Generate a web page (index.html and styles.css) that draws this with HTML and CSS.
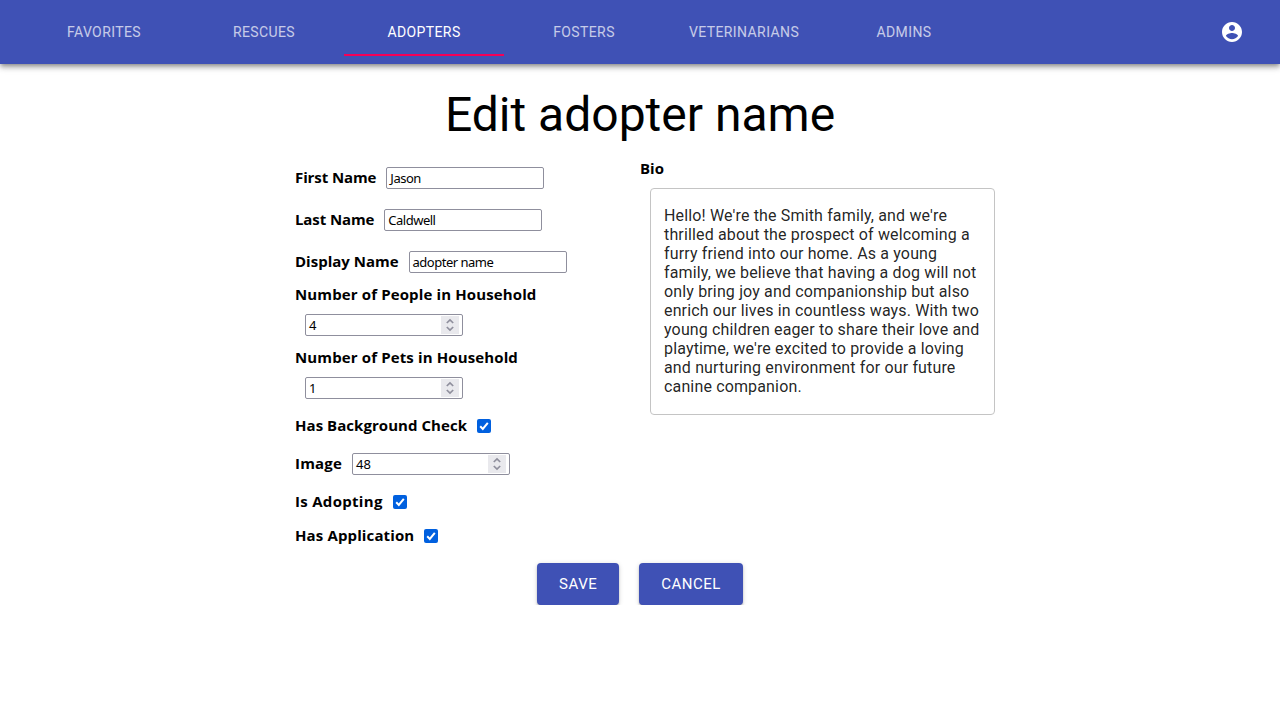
FILE: index.html
```html
<!DOCTYPE html>
<html lang="en">
<head>
<meta charset="utf-8">
<title>Edit adopter name</title>
<link rel="stylesheet" href="styles.css">
</head>
<body>
<header class="app-bar">
  <nav class="tabs">
    <a class="tab">Favorites</a>
    <a class="tab">Rescues</a>
    <a class="tab tab-active">Adopters</a>
    <a class="tab">Fosters</a>
    <a class="tab">Veterinarians</a>
    <a class="tab">Admins</a>
  </nav>
  <svg class="account" viewBox="0 0 24 24"><path d="M12 2C6.48 2 2 6.48 2 12s4.48 10 10 10 10-4.480 10-10S17.520 2 12 2zm0 3c1.660 0 3 1.340 3 3s-1.340 3-3 3-3-1.340-3-3 1.340-3 3-3zm0 14.200c-2.500 0-4.710-1.280-6-3.220.030-1.990 4-3.080 6-3.080 1.990 0 5.970 1.090 6 3.080-1.290 1.940-3.500 3.220-6 3.220z"/></svg>
</header>
<main>
  <h1 class="title">Edit adopter name</h1>
  <form class="form">
    <div class="column">
      <div class="row"><label class="label label-tight">First Name</label><div class="field field-text">Jason</div></div>
      <div class="row"><label class="label label-tight">Last Name</label><div class="field field-text">Caldwell</div></div>
      <div class="row"><label class="label">Display Name</label><div class="field field-text">adopter name</div></div>
      <div class="row row-stacked"><label class="label label-wide">Number of People in Household</label>
        <div class="field field-number">4<span class="spinner"><svg viewBox="0 0 18 18"><path d="M5.800 7L9 4l3.200 3M5.800 11L9 14l3.200-3"/></svg></span></div></div>
      <div class="row row-stacked"><label class="label label-wide">Number of Pets in Household</label>
        <div class="field field-number">1<span class="spinner"><svg viewBox="0 0 18 18"><path d="M5.800 7L9 4l3.200 3M5.800 11L9 14l3.200-3"/></svg></span></div></div>
      <div class="row"><label class="label label-check">Has Background Check</label><span class="check"><svg viewBox="0 0 14 14"><path d="M3.200 7.300l2.600 2.600 5-6"/></svg></span></div>
      <div class="row"><label class="label label-image">Image</label>
        <div class="field field-number">48<span class="spinner"><svg viewBox="0 0 18 18"><path d="M5.800 7L9 4l3.200 3M5.800 11L9 14l3.200-3"/></svg></span></div></div>
      <div class="row"><label class="label label-adopting">Is Adopting</label><span class="check"><svg viewBox="0 0 14 14"><path d="M3.200 7.300l2.600 2.600 5-6"/></svg></span></div>
      <div class="row"><label class="label label-wide">Has Application</label><span class="check"><svg viewBox="0 0 14 14"><path d="M3.200 7.300l2.600 2.600 5-6"/></svg></span></div>
    </div>
    <div class="column">
      <label class="label label-bio">Bio</label>
      <div class="bio">Hello! We're the Smith family, and we're thrilled about the prospect of welcoming a furry friend into our home. As a young family, we believe that having a dog will not only bring joy and companionship but also enrich our lives in countless ways. With two young children eager to share their love and playtime, we're excited to provide a loving and nurturing environment for our future canine companion.</div>
    </div>
  </form>
  <div class="actions">
    <button class="button" type="button">Save</button>
    <button class="button" type="button">Cancel</button>
  </div>
</main>
</body>
</html>
```
FILE: styles.css
```css
* { box-sizing: border-box; }
body { margin: 0; background: #fff; color: #000; font-family: Roboto, sans-serif; }
.app-bar {
  display: flex; align-items: center; justify-content: space-between;
  height: 64px; padding: 0 36px 0 24px; background: #3f51b5; color: #fff;
  box-shadow: 0 2px 4px -1px rgba(0,0,0,.3), 0 4px 5px 0 rgba(0,0,0,.18), 0 1px 10px 0 rgba(0,0,0,.14);
}
.tabs { display: flex; height: 48px; }
.tab {
  width: 160px; line-height: 48px; text-align: center; text-transform: uppercase;
  font-size: 14px; font-weight: 400; letter-spacing: .4px; opacity: .7;
}
.tab-active { opacity: 1; box-shadow: inset 0 -2px #f50057; }
.account { width: 24px; height: 24px; fill: #fff; }
.title {
  margin: 23px 0 14px; text-align: center; font-size: 48px; font-weight: 400;
  line-height: 56px; letter-spacing: 0;
}
.form { display: flex; width: 690px; margin: 0 auto; }
.column { width: 345px; flex: none; }
.row { display: flex; align-items: center; }
.row-stacked { display: block; }
.label {
  display: block; height: 21px; line-height: 19px; white-space: nowrap;
  font-family: "Open Sans", sans-serif; font-size: 15px; font-weight: 700;
}
.row-stacked .label, .label-bio { line-height: 23px; }
.label-tight { letter-spacing: -.1px; }
.label-wide { letter-spacing: .13px; }
.label-check { letter-spacing: .05px; }
.label-image { letter-spacing: .2px; }
.label-adopting { letter-spacing: .3px; }
.field {
  width: 158px; height: 22px; margin: 10px; padding: 0 3px;
  border: 1px solid #8f8f9d; border-radius: 2px; background: #fff;
  font: 13px/21px "Noto Sans", sans-serif;
}
.field-text { letter-spacing: -.5px; }
.field-number { display: flex; justify-content: space-between; align-items: center; }
.spinner { width: 18px; height: 18px; background: #e9e9ed; }
.spinner svg { display: block; fill: none; stroke: #8f8f9d; stroke-width: 1.700; }
.check { width: 14px; height: 14px; margin: 10px; border-radius: 2px; background: #0060df; }
.check svg { display: block; fill: none; stroke: #fff; stroke-width: 2; }
.bio {
  width: 345px; height: 227px; margin: 10px; padding: 17px 13px;
  border: 1px solid #c4c4c4; border-radius: 4px;
  color: rgba(0,0,0,.87); font-size: 16px; line-height: 19px; letter-spacing: .15px;
}
.actions { display: flex; justify-content: center; gap: 20px; padding-top: 10px; }
.button {
  height: 42px; padding: 0 22px; border: 0; border-radius: 4px;
  background: #3f51b5; color: #fff; font: 400 15px/26px Roboto, sans-serif;
  letter-spacing: .5px; text-transform: uppercase;
  box-shadow: 0 3px 1px -2px rgba(0,0,0,.25), 0 2px 2px 0 rgba(0,0,0,.18), 0 1px 5px 0 rgba(0,0,0,.16);
}
```
